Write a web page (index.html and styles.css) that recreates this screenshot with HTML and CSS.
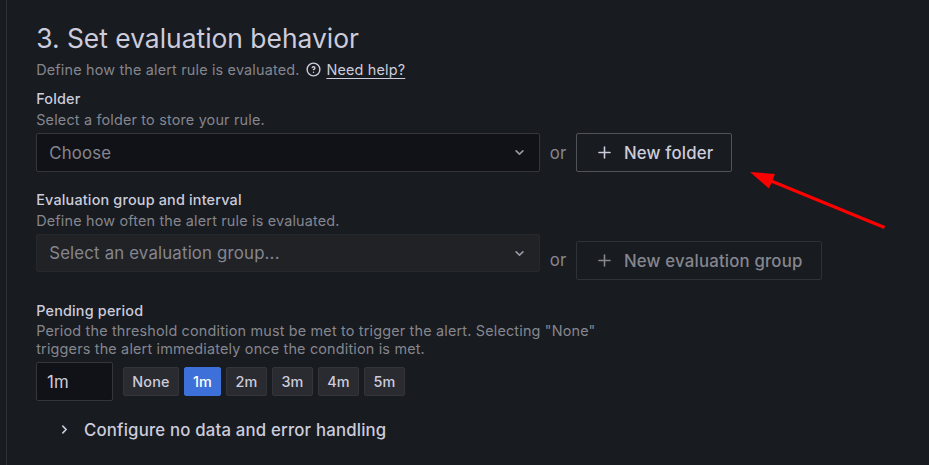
FILE: index.html
```html
<!DOCTYPE html>
<html lang="en">
<head>
<meta charset="utf-8">
<title>Set evaluation behavior</title>
<link rel="stylesheet" href="styles.css">
</head>
<body>
<main class="step">
  <h3 class="title">3. Set evaluation behavior</h3>
  <div class="intro">
    <span>Define how the alert rule is evaluated.</span>
    <svg class="help-icon" viewBox="0 0 24 24" fill="currentColor"><path d="M11.29,15.29a1.58,1.58,0,0,0-.12.15.76.76,0,0,0-.09.18.64.64,0,0,0-.06.18,1.36,1.36,0,0,0,0,.2.84.84,0,0,0,.08.38.9.9,0,0,0,.54.54.94.94,0,0,0,.76,0,.9.9,0,0,0,.54-.54A1,1,0,0,0,13,16a1,1,0,0,0-.29-.71A1,1,0,0,0,11.29,15.29ZM12,2A10,10,0,1,0,22,12,10,10,0,0,0,12,2Zm0,18a8,8,0,1,1,8-8A8,8,0,0,1,12,20ZM12,7A3,3,0,0,0,9.4,8.5a1,1,0,1,0,1.73,1A1,1,0,0,1,12,9a1,1,0,0,1,0,2,1,1,0,1,0,0,2,3,3,0,0,0,0-6Z"/></svg>
    <a class="help">Need help?</a>
  </div>

  <section class="field folder">
    <label class="label">Folder</label>
    <p class="description">Select a folder to store your rule.</p>
    <div class="row">
      <div class="select"><span>Choose</span><svg class="chevron" viewBox="0 0 24 24" fill="currentColor"><path d="M17,9.17a1,1,0,0,0-1.41,0L12,12.71,8.46,9.17a1,1,0,0,0-1.41,0,1,1,0,0,0,0,1.42l4.24,4.24a1,1,0,0,0,1.42,0L17,10.59A1,1,0,0,0,17,9.17Z"/></svg></div>
      <span class="or">or</span>
      <button class="button"><svg class="plus" viewBox="0 0 24 24" fill="currentColor"><path d="M19,11H13V5a1,1,0,0,0-2,0v6H5a1,1,0,0,0,0,2h6v6a1,1,0,0,0,2,0V13h6a1,1,0,0,0,0-2Z"/></svg>New folder</button>
    </div>
  </section>

  <section class="field group">
    <label class="label">Evaluation group and interval</label>
    <p class="description">Define how often the alert rule is evaluated.</p>
    <div class="row row-low">
      <div class="select disabled"><span>Select an evaluation group...</span><svg class="chevron" viewBox="0 0 24 24" fill="currentColor"><path d="M17,9.17a1,1,0,0,0-1.41,0L12,12.71,8.46,9.17a1,1,0,0,0-1.41,0,1,1,0,0,0,0,1.42l4.24,4.24a1,1,0,0,0,1.42,0L17,10.59A1,1,0,0,0,17,9.17Z"/></svg></div>
      <span class="or">or</span>
      <button class="button" disabled><svg class="plus" viewBox="0 0 24 24" fill="currentColor"><path d="M19,11H13V5a1,1,0,0,0-2,0v6H5a1,1,0,0,0,0,2h6v6a1,1,0,0,0,2,0V13h6a1,1,0,0,0,0-2Z"/></svg>New evaluation group</button>
    </div>
  </section>

  <section class="field pending">
    <label class="label">Pending period</label>
    <p class="description multiline">Period the threshold condition must be met to trigger the alert. Selecting "None"<br>triggers the alert immediately once the condition is met.</p>
    <div class="periods">
      <input class="input" value="1m">
      <button class="chip none">None</button>
      <button class="chip active">1m</button>
      <button class="chip">2m</button>
      <button class="chip">3m</button>
      <button class="chip">4m</button>
      <button class="chip">5m</button>
    </div>
  </section>

  <div class="collapse">
    <svg class="angle" viewBox="0 0 24 24" fill="currentColor"><path d="M14.83,11.29,10.59,7.05a1,1,0,0,0-1.42,0,1,1,0,0,0,0,1.41L12.71,12,9.17,15.54a1,1,0,0,0,0,1.41,1,1,0,0,0,.71.29,1,1,0,0,0,.71-.29l4.24-4.24A1,1,0,0,0,14.83,11.29Z"/></svg>
    <span>Configure no data and error handling</span>
  </div>
</main>
<svg class="arrow" viewBox="0 0 140 62"><path d="M20 10.500 134.500 57.500" stroke="#f00" stroke-width="3"/><path d="M0 2 25 4 19 18.500Z" fill="#f00"/></svg>
</body>
</html>
```
FILE: styles.css
```css
* { box-sizing: border-box; }
body {
  margin: 0;
  height: 465px;
  overflow: hidden;
  padding-left: 6px;
  background: #181b1f;
  color: #ccccdc;
  font-family: Inter, "Liberation Sans", sans-serif;
  font-size: 16.8px;
  letter-spacing: 0.01071em;
}
.step {
  height: 465px;
  padding: 22px 0 0 29.2px;
  border-left: 1px solid #2e3136;
}
.title {
  margin: 0;
  font-size: 26.4px;
  line-height: 32px;
  font-weight: 400;
  letter-spacing: 0;
}
.intro {
  display: flex;
  align-items: center;
  height: 18px;
  margin-top: 6px;
  font-size: 14.4px;
  letter-spacing: 0.0125em;
  color: #85868f;
}
.help-icon { width: 17px; height: 17px; margin: 0 4.2px 0 5.6px; color: #ccccdc; }
.help { color: #ccccdc; line-height: 17px; text-decoration: underline; text-underline-offset: 3px; text-decoration-thickness: 1px; }
.field { display: flex; flex-direction: column; }
.folder { margin-top: 12px; }
.label {
  font-size: 14.4px;
  font-weight: 500;
  line-height: 18px;
  letter-spacing: 0.0125em;
}
.description {
  margin: 3px 0 0;
  font-size: 14.4px;
  line-height: 18px;
  letter-spacing: 0.0125em;
  color: #85868f;
}
.row { display: flex; align-items: center; margin-top: 4px; }
.select {
  display: flex;
  align-items: center;
  justify-content: space-between;
  width: 504px;
  height: 39px;
  padding: 0 10px 0 12px;
  border: 1px solid #34363c;
  border-radius: 2px;
  background: #111217;
  color: #85868f;
}
.chevron { width: 19px; height: 19px; color: #9899a5; }
.disabled { height: 38px; background: #202226; border-color: #25282c; }
.or { width: 35.8px; text-align: center; color: #85868f; }
.button {
  display: flex;
  align-items: center;
  height: 39px;
  padding: 0 18px;
  border: 1px solid #515359;
  border-radius: 2px;
  background: transparent;
  color: #ccccdc;
  font: 500 16.8px Inter, "Liberation Sans", sans-serif;
  letter-spacing: 0.01071em;
}
.plus { width: 19px; height: 19px; margin-right: 10px; }
.button:disabled { color: #85868f; border-color: #2e3136; }
.group { margin-top: 19px; }
.row-low { align-items: flex-end; height: 46px; }
.row-low .select { align-self: flex-start; }
.row-low .or { line-height: 39px; }
.pending { margin-top: 22px; }
.pending .multiline { margin-top: 2px; }
.periods { display: flex; align-items: center; gap: 5px; margin-top: 4px; }
.input {
  width: 77px;
  height: 39px;
  margin-right: 4.8px;
  padding: 0 9.8px;
  border: 1px solid #34363c;
  border-radius: 2px;
  background: #111217;
  color: #ccccdc;
  font: 400 16.8px Inter, "Liberation Sans", sans-serif;
  letter-spacing: 0.01071em;
}
.chip {
  width: 41px;
  height: 29px;
  padding: 0;
  border: 1px solid #34353b;
  border-radius: 2px;
  background: #2a2b31;
  color: #ccccdc;
  font: 500 14.4px Inter, "Liberation Sans", sans-serif;
  letter-spacing: 0.01071em;
}
.none { width: 56px; }
.active { width: 37px; background: #3d71d9; border-color: #3d71d9; color: #fff; }
.collapse { display: flex; align-items: center; height: 24px; margin-top: 17px; font-weight: 500; }
.angle { width: 19px; height: 19px; margin: 0 9.8px 1px 19px; }
.arrow { position: absolute; left: 750px; top: 170px; width: 140px; height: 62px; }
```
